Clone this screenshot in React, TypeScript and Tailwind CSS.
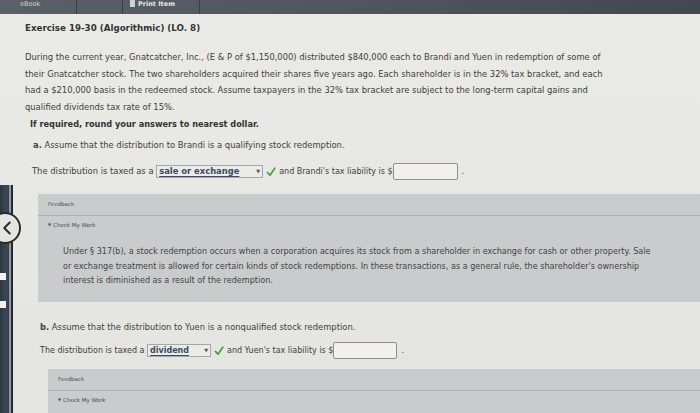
import { ChevronLeft } from "lucide-react"

const font = { fontFamily: '"DejaVu Sans", Verdana, sans-serif' }

function Dropdown({ value, width }: { value: string; width: string }) {
  return (
    <span className={`inline-flex items-center justify-between h-[13px] border border-[#a3a7ae] bg-[#ecebe7] px-[2px] ${width}`}>
      <span className="font-bold text-[#3c4a66] underline underline-offset-2 decoration-[#3c4a66] leading-none">{value}</span>
      <span className="text-[5px] text-[#555]">▼</span>
    </span>
  )
}

function Check() {
  return (
    <svg width="10" height="10" viewBox="0 0 10 10" className="mx-[3px] inline-block">
      <path d="M1.5 5.5 L4 8.2 L8.8 1.2" fill="none" stroke="#4f9a3f" strokeWidth="1.7" strokeLinecap="round" strokeLinejoin="round" />
    </svg>
  )
}

function AnswerBox({ width }: { width: string }) {
  return <span className={`inline-block h-[17px] border border-[#8d8f93] rounded-[2px] bg-[#f1f0ec] ${width}`}></span>
}

function FeedbackHeader() {
  return (
    <>
      <div className="h-[22px] flex items-center pl-[10px] text-[5.5px] text-[#555] border-b border-[#aeb0b2]">Feedback</div>
      <div className="pl-[10px] pt-[5px] leading-[8px] text-[5.5px] text-[#4a4a4a] flex items-center gap-[2px]">
        <span className="text-[4px]">▼</span>Check My Work
      </div>
    </>
  )
}

export default function App() {
  return (
    <div className="relative w-[700px] h-[413px] overflow-hidden bg-gradient-to-b from-[#eaeae6] to-[#e4e4e0] text-[#3e3e3e]" style={font}>
      {/* top toolbar */}
      <div className="h-[14px] bg-gradient-to-r from-[#5a6068] via-[#4f565e] to-[#414850] flex text-[#e8e8e8] text-[6.5px] leading-[8px]">
        <div className="w-[77px] border-r border-[#3a3f45] pl-[20px] text-[#cfd2d5]">eBook</div>
        <div className="w-[46px] border-r border-[#3a3f45]"></div>
        <div className="w-[77px] border-r border-[#3a3f45] flex items-start gap-[3px] pl-[7px]">
          <span className="w-[5px] h-[7px] bg-[#cfd2d5]"></span>
          <span className="font-bold">Print Item</span>
        </div>
        <div className="flex-1"></div>
      </div>

      <div className="pl-[25px] text-[8.4px]">
        <h1 className="mt-[8px] leading-[12px] text-[8.7px] font-bold text-[#333]">Exercise 19-30 (Algorithmic) (LO. 8)</h1>

        <p className="mt-[15px] leading-[16.5px] whitespace-nowrap">
          During the current year, Gnatcatcher, Inc., (E &amp; P of $1,150,000) distributed $840,000 each to Brandi and Yuen in redemption of some of
          <br />
          their Gnatcatcher stock. The two shareholders acquired their shares five years ago. Each shareholder is in the 32% tax bracket, and each
          <br />
          had a $210,000 basis in the redeemed stock. Assume taxpayers in the 32% tax bracket are subject to the long-term capital gains and
          <br />
          qualified dividends tax rate of 15%.
        </p>

        <div className="pl-[5px]">
          <p className="mt-[3px] leading-[12px] font-bold text-[8.2px] text-[#333]">
            If required, round your answers to nearest dollar.
          </p>
          <p className="mt-[9px] leading-[12px] pl-[3px]">
            <span className="font-bold text-[#444]">a.</span> Assume that the distribution to Brandi is a qualifying stock redemption.
          </p>
          <div className="mt-[12px] flex items-center pl-[2px] h-[17px]">
            <span>The distribution is taxed as a&nbsp;</span>
            <Dropdown value="sale or exchange" width="w-[107px]" />
            <Check />
            <span className="text-[8px]">and Brandi's tax liability is $</span>
            <AnswerBox width="w-[65px]" />
            <span className="ml-[4px]">.</span>
          </div>
        </div>

        {/* feedback a */}
        <div className="mt-[14px] ml-[13px] h-[108px] bg-[#c9cbcc]">
          <FeedbackHeader />
          <p className="mt-[15px] pl-[25px] leading-[14.5px] text-[8.1px] text-[#444] whitespace-nowrap">
            Under § 317(b), a stock redemption occurs when a corporation acquires its stock from a shareholder in exchange for cash or other property. Sale
            <br />
            or exchange treatment is allowed for certain kinds of stock redemptions. In these transactions, as a general rule, the shareholder's ownership
            <br />
            interest is diminished as a result of the redemption.
          </p>
        </div>

        <div className="pl-[15px]">
          <p className="mt-[19px] leading-[12px]">
            <span className="font-bold text-[#444]">b.</span> Assume that the distribution to Yuen is a nonqualified stock redemption.
          </p>
          <div className="mt-[9px] flex items-center h-[17px] text-[8px]">
            <span>The distribution is taxed a&nbsp;</span>
            <Dropdown value="dividend" width="w-[64px]" />
            <Check />
            <span>and Yuen's tax liability is $</span>
            <AnswerBox width="w-[64px]" />
            <span className="ml-[4px]">.</span>
          </div>
        </div>

        {/* feedback b */}
        <div className="mt-[10px] ml-[23px] h-[60px] bg-[#c9cbcc]">
          <FeedbackHeader />
        </div>
      </div>

      {/* monitor bezel on the left edge */}
      <div className="absolute left-0 top-[185px] bottom-0 w-[13px] bg-gradient-to-r from-[#2d3640] via-[#3c4956] to-[#1e252c]">
        <div className="absolute right-[2px] top-0 bottom-0 w-[2px] bg-[#8f9aa5]"></div>
        <div className="absolute left-0 top-[88px] w-[6px] h-[7px] bg-[#f2f2f2]"></div>
        <div className="absolute left-0 top-[116px] w-[6px] h-[7px] bg-[#f2f2f2]"></div>
      </div>
      <div className="absolute left-[-11px] top-[212px] w-[32px] h-[32px] rounded-full border-[2px] border-[#2b2b2b] bg-[#e5e5e1] flex items-center justify-end pr-[1px]">
        <ChevronLeft size={22} strokeWidth={2.2} color="#2b2b2b" />
      </div>
    </div>
  )
}
